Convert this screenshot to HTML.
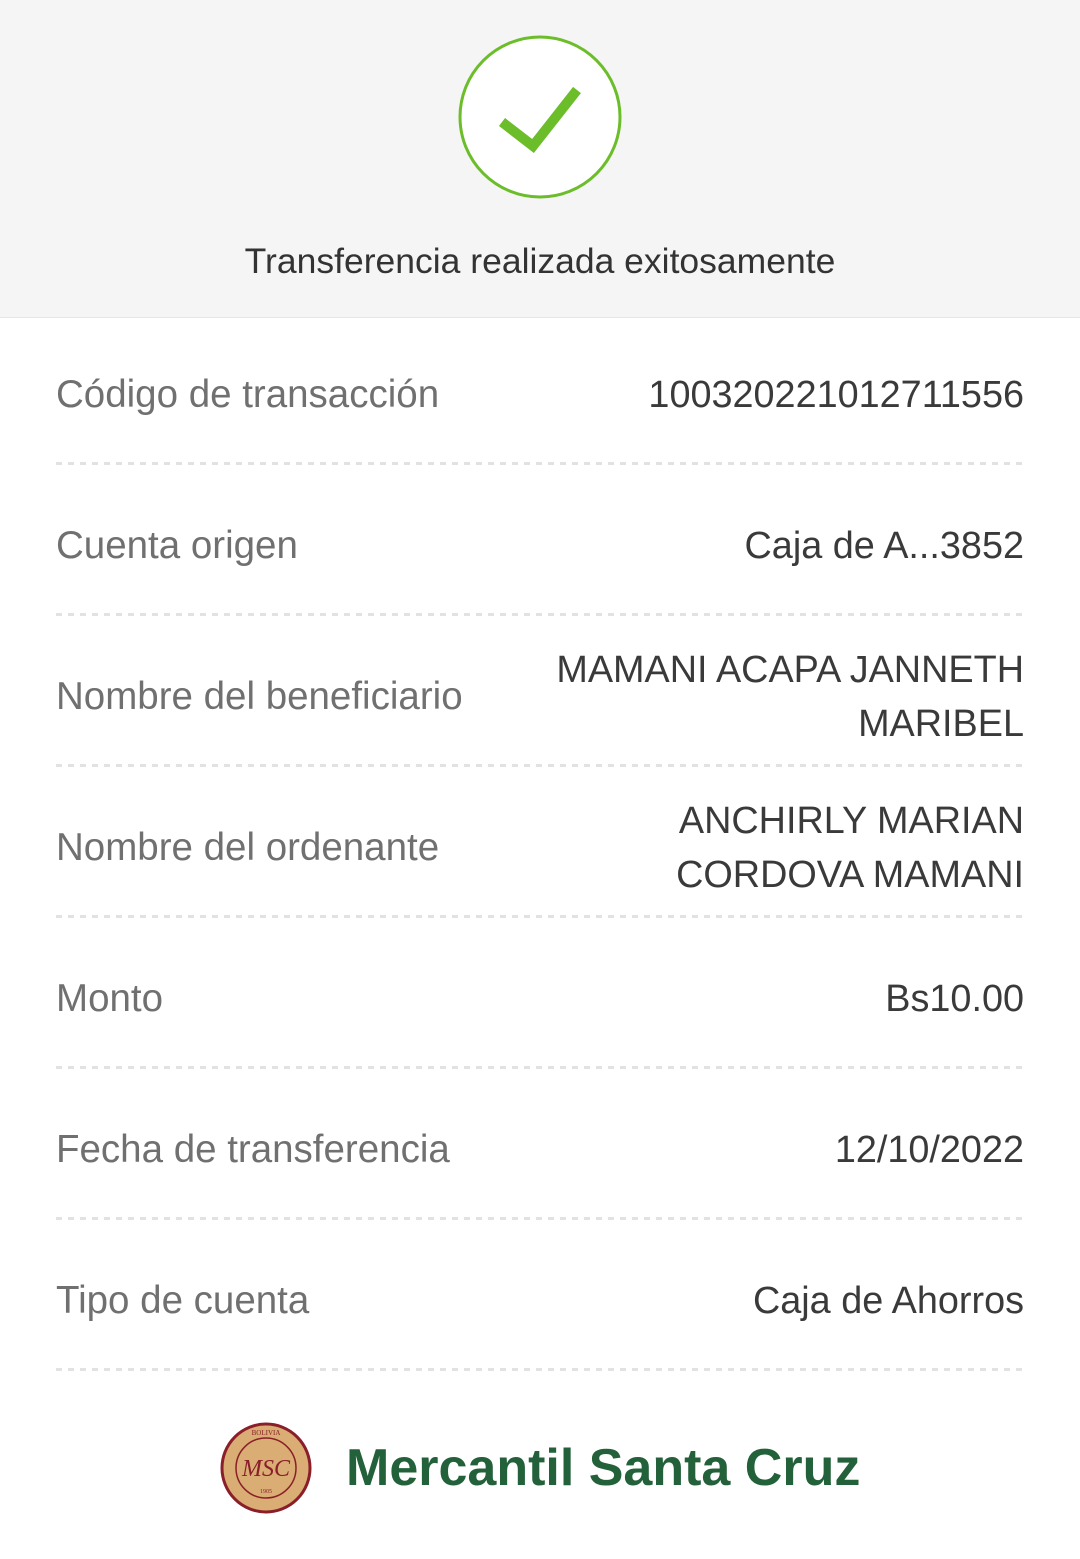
<!DOCTYPE html>
<html><head><meta charset="utf-8"><style>
body{margin:0;width:1080px;height:1559px;background:#fff;font-family:"Liberation Sans",sans-serif;overflow:hidden}
.hdr{height:317px;background:#f5f5f5;border-bottom:1px solid #e6e6e6;position:relative}
.hdr .t{position:absolute;top:241px;left:0;width:1080px;text-align:center;font-size:35.5px;color:#333}
.row{position:absolute;left:56px;width:968px;height:151px;display:flex;align-items:center;justify-content:space-between}
.row::after{content:"";position:absolute;left:0;right:0;bottom:5px;height:3px;background:repeating-linear-gradient(90deg,#e2e2e2 0 6px,transparent 6px 12px)}
.l{font-size:38.5px;color:#707070}
.v{font-size:37.8px;color:#3a3a3a;text-align:right;line-height:54px}
.logo{position:absolute;top:1422px;left:220px;display:flex;align-items:center}
.logo .n{font-size:52px;font-weight:bold;color:#23613a;margin-left:34px}
</style></head><body>
<div class="hdr">
<svg width="1080" height="220" style="position:absolute;top:0;left:0">
<circle cx="540" cy="117" r="80" fill="#fff" stroke="#6cbd2a" stroke-width="3"/>
<path d="M502 122 L533 146 L577 90" fill="none" stroke="#6cbd2a" stroke-width="10"/>
</svg>
<div class="t">Transferencia realizada exitosamente</div>
</div>
<div class="row" style="top:319px"><span class="l">Código de transacción</span><span class="v">100320221012711556</span></div>
<div class="row" style="top:470px"><span class="l">Cuenta origen</span><span class="v">Caja de A...3852</span></div>
<div class="row" style="top:621px"><span class="l">Nombre del beneficiario</span><span class="v">MAMANI ACAPA JANNETH<br>MARIBEL</span></div>
<div class="row" style="top:772px"><span class="l">Nombre del ordenante</span><span class="v">ANCHIRLY MARIAN<br>CORDOVA MAMANI</span></div>
<div class="row" style="top:923px"><span class="l">Monto</span><span class="v">Bs10.00</span></div>
<div class="row" style="top:1074px"><span class="l">Fecha de transferencia</span><span class="v">12/10/2022</span></div>
<div class="row" style="top:1225px"><span class="l">Tipo de cuenta</span><span class="v">Caja de Ahorros</span></div>
<div class="logo">
<svg width="92" height="92" viewBox="0 0 92 92">
<circle cx="46" cy="46" r="44" fill="#d9ad74" stroke="#8a1f2a" stroke-width="3"/>
<circle cx="46" cy="46" r="30" fill="none" stroke="#8a1f2a" stroke-width="1.5"/>
<text x="46" y="54" text-anchor="middle" font-family="Liberation Serif,serif" font-style="italic" font-size="24" fill="#8a1f2a">MSC</text>
<text x="46" y="13" text-anchor="middle" font-family="Liberation Serif,serif" font-size="7" fill="#8a1f2a">BOLIVIA</text>
<text x="46" y="71" text-anchor="middle" font-family="Liberation Serif,serif" font-size="6" fill="#8a1f2a">1905</text>
</svg>
<span class="n">Mercantil Santa Cruz</span>
</div>
</body></html>
